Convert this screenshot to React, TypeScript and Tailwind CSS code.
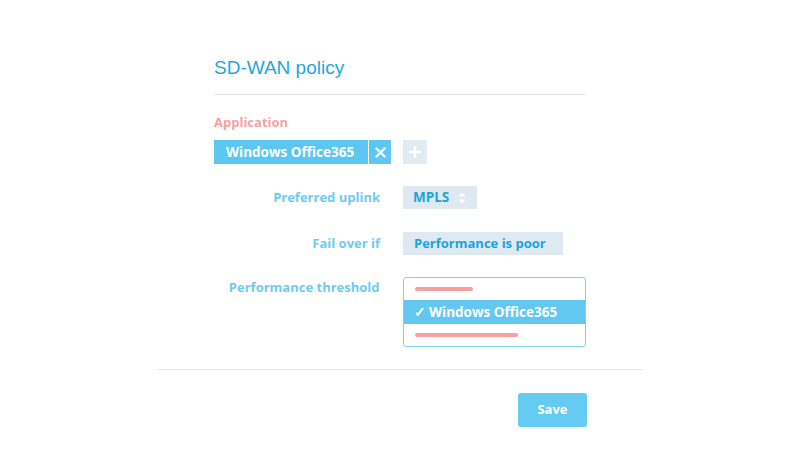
import React from "react";

const SortIcon = () => (
  <svg width="8" height="12" viewBox="0 0 8 12" className="ml-[9px]">
    <path d="M4 0.5 L7.5 4.5 H0.5 Z" fill="#ffffff" />
    <path d="M4 11.5 L7.5 7.5 H0.5 Z" fill="#ffffff" />
  </svg>
);

const App = () => {
  const label = "w-[189px] text-right text-[13px] font-bold text-[#6fcbf1] pr-[23px]";
  return (
    <div className="w-[800px] h-[450px] bg-white flex justify-center" style={{ fontFamily: "'Open Sans', Lato, sans-serif" }}>
      <div className="w-[486px] pt-[56px] flex flex-col">
        <div className="px-[57px]">
          <h1 className="text-[19px] text-[#1ea6df] leading-[24px]" style={{ fontFamily: "'Liberation Sans', Arial, sans-serif" }}>SD-WAN policy</h1>
          <div className="h-px bg-[#e3e6e8] mt-[14px]" />

          <div className="mt-[19px] text-[13px] font-bold text-[#f6a19f] leading-[16px]">Application</div>
          <div className="flex items-center mt-[10px]">
            <div className="h-[24px] w-[154px] bg-[#5cc7f3] text-white text-[13.5px] font-bold flex items-center pl-[12px]">Windows Office365</div>
            <div className="h-[24px] w-[22px] ml-px bg-[#5cc7f3] flex items-center justify-center">
              <svg width="11" height="11" viewBox="0 0 11 11">
                <path d="M1.5 1.5 L9.5 9.5 M9.5 1.5 L1.5 9.5" stroke="#fff" strokeWidth="2.4" strokeLinecap="round" />
              </svg>
            </div>
            <div className="h-[24px] w-[24px] ml-[12px] bg-[#e2ebf1] flex items-center justify-center">
              <svg width="12" height="12" viewBox="0 0 12 12">
                <path d="M6 1 V11 M1 6 H11" stroke="#fff" strokeWidth="2.4" strokeLinecap="round" />
              </svg>
            </div>
          </div>

          <div className="flex items-center mt-[22px]">
            <div className={label}>Preferred uplink</div>
            <div className="h-[23px] w-[74px] bg-[#dee9f1] flex items-center pl-[10px] text-[13.5px] font-bold text-[#1aa3de]">
              MPLS<SortIcon />
            </div>
          </div>

          <div className="flex items-center mt-[23px]">
            <div className={label}>Fail over if</div>
            <div className="h-[23px] w-[160px] bg-[#dee9f1] flex items-center pl-[11px] text-[13px] font-bold text-[#1aa3de]">Performance is poor</div>
          </div>

          <div className="flex items-start mt-[22px]">
            <div className={label + " mt-[1px]"}>Performance threshold</div>
            <div className="w-[184px] h-[70px] border border-[#7fd0f3] rounded-[3px] flex flex-col">
              <div className="h-[22px] flex items-center pl-[11px]">
                <div className="h-[4px] w-[58px] bg-[#f6a19f] rounded-full" />
              </div>
              <div className="h-[24px] bg-[#62c8f2] text-white text-[13.5px] font-bold flex items-center pl-[10px]">✓ Windows Office365</div>
              <div className="flex-1 flex items-center pl-[11px]">
                <div className="h-[4px] w-[103px] bg-[#f6a19f] rounded-full" />
              </div>
            </div>
          </div>
        </div>

        <div className="h-px bg-[#e6e8ea] mt-[22px]" />
        <div className="flex justify-end px-[56px] mt-[23px]">
          <button className="w-[69px] h-[34px] rounded-[3px] bg-[#66cbf3] text-white text-[13px] font-bold">Save</button>
        </div>
      </div>
    </div>
  );
};

export default App;
